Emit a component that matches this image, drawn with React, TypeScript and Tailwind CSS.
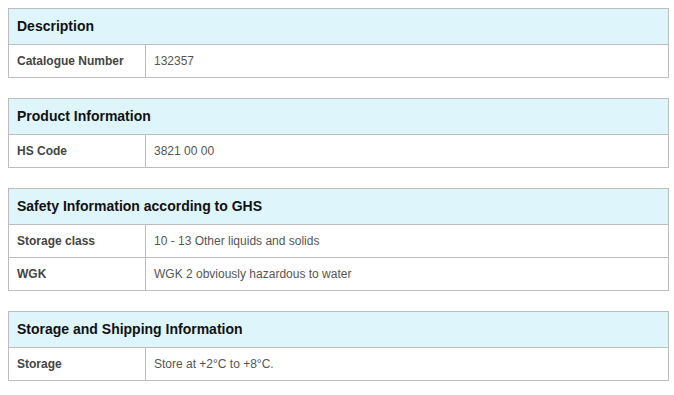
const sections = [
  { title: 'Description', rows: [['Catalogue Number', '132357']] },
  { title: 'Product Information', rows: [['HS Code', '3821 00 00']] },
  {
    title: 'Safety Information according to GHS',
    rows: [
      ['Storage class', '10 - 13 Other liquids and solids'],
      ['WGK', 'WGK 2 obviously hazardous to water'],
    ],
  },
  { title: 'Storage and Shipping Information', rows: [['Storage', 'Store at +2°C to +8°C.']] },
];

export default function App() {
  return (
    <div
      className="bg-white p-2 flex flex-col gap-[20px] min-h-[395px]"
      style={{ fontFamily: '"Liberation Sans", Arial, sans-serif' }}
    >
      {sections.map((s) => (
        <div key={s.title} className="w-[661px] border-x border-t border-[#bdbdbd]">
          <div className="h-[36px] flex items-center px-2 bg-[#dff5fc] border-b border-[#bdbdbd] text-[14px] font-bold text-[#111]">
            {s.title}
          </div>
          {s.rows.map(([label, value]) => (
            <div key={label} className="h-[33px] flex text-[12px] border-b border-[#bdbdbd]">
              <div className="w-[137px] shrink-0 flex items-center px-2 border-r border-[#bdbdbd] font-bold text-[#444]">
                {label}
              </div>
              <div className="flex items-center px-2 text-[#555]">{value}</div>
            </div>
          ))}
        </div>
      ))}
    </div>
  );
}
